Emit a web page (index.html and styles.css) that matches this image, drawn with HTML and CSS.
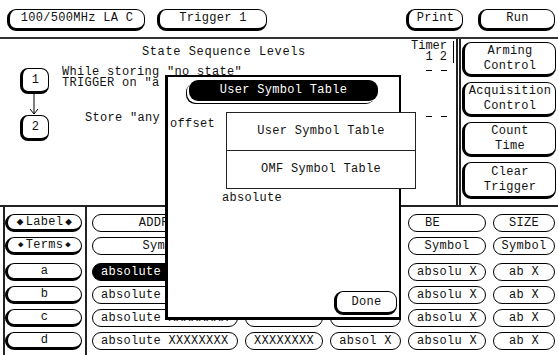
FILE: index.html
```html
<!doctype html>
<html lang="en">
<head>
<meta charset="UTF-8">
<title>State Sequence Levels</title>
<link rel="stylesheet" href="styles.css">
</head>
<body>
  <header class="topbar">
    <div class="btn raised w-la">100/500MHz LA C</div>
    <div class="btn raised w-trig">Trigger 1</div>
    <div class="btn raised w-print">Print</div>
    <div class="btn raised w-run">Run</div>
  </header>

  <section class="main">
    <div class="seq">
      <div class="seq-body">
        <div class="seq-title">State Sequence Levels</div>
        <div class="level level-1">
          <div class="lvl-box">1</div>
          <div class="lvl-text">
            <div>While storing ″no state″</div>
            <div>TRIGGER on ″a</div>
          </div>
        </div>
        <div class="arrow">
          <svg width="10" height="21" viewBox="0 0 10 21"><path d="M5 0V20M1 15L5 20L9 15" fill="none" stroke="#000" stroke-width="1"/></svg>
        </div>
        <div class="level level-2">
          <div class="lvl-box">2</div>
          <div class="lvl-text">Store ″any</div>
        </div>
      </div>
      <div class="timer">
        <div class="timer-head">Timer<br>1 2</div>
        <div class="dash"><span></span><span></span></div>
        <div class="dash dash-2"><span></span><span></span></div>
      </div>
    </div>
    <div class="vsep"></div>
    <nav class="side">
      <div class="btn raised">Arming<br>Control</div>
      <div class="btn raised">Acquisition<br>Control</div>
      <div class="btn raised">Count<br>Time</div>
      <div class="btn raised tall">Clear<br>Trigger</div>
    </nav>
  </section>

  <section class="table">
    <div class="labels">
      <div class="btn raised"><i>◆</i>Label<i>◆</i></div>
      <div class="btn raised"><i class="sm">◆</i>Terms<i class="sm">◆</i></div>
      <div class="btn raised r3">a</div>
      <div class="btn raised">b</div>
      <div class="btn raised">c</div>
      <div class="btn raised">d</div>
    </div>
    <div class="cells">
      <div class="btn">ADDRESS</div>
      <div class="btn"></div>
      <div class="btn"></div>
      <div class="btn pad-l">BE</div>
      <div class="btn">SIZE</div>

      <div class="btn">Symbol</div>
      <div class="btn"></div>
      <div class="btn"></div>
      <div class="btn">Symbol</div>
      <div class="btn">Symbol</div>

      <div class="btn left on r3">absolute XXXXXXXX</div>
      <div class="btn r3"></div>
      <div class="btn r3"></div>
      <div class="btn r3">absolu X</div>
      <div class="btn r3">ab X</div>

      <div class="btn left">absolute XXXXXXXX</div>
      <div class="btn"></div>
      <div class="btn"></div>
      <div class="btn">absolu X</div>
      <div class="btn">ab X</div>

      <div class="btn left">absolute XXXXXXXX</div>
      <div class="btn"></div>
      <div class="btn"></div>
      <div class="btn">absolu X</div>
      <div class="btn">ab X</div>

      <div class="btn left">absolute XXXXXXXX</div>
      <div class="btn">XXXXXXXX</div>
      <div class="btn">absol X</div>
      <div class="btn">absolu X</div>
      <div class="btn">ab X</div>
    </div>
  </section>

  <!-- symbol dialog over the trigger screen -->
  <div class="dialog">
    <div class="dlg-title">User Symbol Table</div>
    <div class="dlg-offset">offset</div>
    <div class="dlg-base">absolute</div>
    <div class="btn raised done">Done</div>
  </div>
  <div class="menu">
    <div class="menu-item">User Symbol Table</div>
    <div class="menu-item">OMF Symbol Table</div>
  </div>
</body>
</html>
```

FILE: styles.css
```css
*{margin:0;
  padding:0;
  box-sizing:border-box;}
body{width:558px;
     height:355px;
     overflow:hidden;
     position:relative;
     background:#fff;
     color:#111;
     font:12px/11px "Liberation Mono", "DejaVu Sans Mono", monospace;
     letter-spacing:0.3px;}

.btn{display:flex;
     align-items:center;
     justify-content:center;
     text-align:center;
     white-space:nowrap;
     overflow:hidden;
     border:1px solid #000;
     border-radius:9px;
     background:#fff;}
.raised{border-left-width:3px;
        border-bottom-width:3px;}

/* top bar */
.topbar{display:flex;
        height:39px;
        padding:9px 3px 0 7px;
        border-bottom:2px solid #333;}
.topbar .btn{height:22px;
             padding-bottom:1px;}
.w-la{width:138px;}
.w-trig{width:110px; margin-left:12px;}
.w-print{width:57px; margin-left:auto;}
.w-run{width:77px; margin-left:15px;}

/* sequence area */
.main{display:flex;
      height:168px;
      border-bottom:2px solid #222;}
.seq{width:456px;
     display:flex;}
.seq-body{flex:1;
          padding-top:8px;
          white-space:nowrap;}
.seq-title{padding-left:142px;
           letter-spacing:0.6px;}
.level{display:flex;
       align-items:flex-start;}
.level-1{margin-top:9px;}
.lvl-box{width:29px;
         height:26px;
         margin-left:20px;
         border:1px solid #000;
         border-left-width:3px;
         border-bottom-width:3px;
         border-radius:8px;
         display:flex;
         align-items:center;
         justify-content:center;}
.level-1 .lvl-box{margin-top:1px;}
.level-1 .lvl-text{margin-left:13px;}
.level-2 .lvl-box{margin-top:2px;}
.level-2 .lvl-text{margin-left:36px;}
.arrow{height:19px;
       margin-left:29px;}
.arrow svg{display:block;}

.timer{width:46px;
       padding-top:2px;
       text-align:right;}
.timer-head{height:22px;
            margin-right:2px;
            padding-right:6px;
            letter-spacing:0;
            border-right:1px solid #000;}
.dash{display:flex;
      justify-content:flex-end;
      gap:9px;
      margin-top:7px;
      padding-right:9px;}
.dash span{width:6px;
           border-top:1px solid #000;}
.dash-2{margin-top:45px;}

.vsep{width:5px;
      border-left:2px solid #222;
      border-right:2px solid #222;}
.side{flex:1;
      display:flex;
      flex-direction:column;
      gap:5px;
      padding:3px 2px 0 1px;}
.side .btn{height:35px;
           line-height:15px;}
.side .tall{height:37px;}

/* label / term table */
.table{display:flex;
       height:148px;}
.labels{width:84px;
        margin-left:3px;
        border-left:2px solid #222;
        border-right:2px solid #222;
        padding:7px 3px 0 0;
        display:flex;
        flex-direction:column;
        gap:5px;}
.labels .btn{height:18px;}
.labels i{font-style:normal;
          font-size:11px;
          margin:0 2px;}
.labels i.sm{font-size:9px;}
.cells{display:grid;
       grid-template-columns:146px 78px 71px 78px 62px;
       grid-template-rows:18px 18px 21px 18px 18px 18px;
       column-gap:7px;
       row-gap:5px;
       padding:7px 0 0 5px;}
.cells .btn{height:18px;}
.r3{margin-top:3px;}
.cells .left{justify-content:flex-start;
             padding-left:8px;}
.cells .pad-l{justify-content:flex-start;
              padding-left:16px;}
.cells .on{background:#000;
           color:#fff;}

/* dialog */
.dialog{position:absolute;
        left:165px;
        top:75px;
        width:236px;
        height:245px;
        background:#fff;
        border:2px solid #000;
        border-left-width:3px;
        border-bottom-width:3px;
        display:flex;
        flex-direction:column;}
.dlg-title{margin:3px 0 0 21px;
           width:189px;
           height:21px;
           background:#000;
           color:#fff;
           border-radius:9px;
           box-shadow:-2px 2px 0 #fff, -3px 3px 0 #000;
           display:flex;
           align-items:center;
           justify-content:center;}
.dlg-offset{margin-top:18px;
            padding-left:2px;}
.dlg-base{margin-top:63px;
          padding-left:54px;}
.done{margin-top:auto;
      align-self:flex-end;
      margin-right:2px;
      margin-bottom:2px;
      width:63px;
      height:24px;}

.menu{position:absolute;
      left:226px;
      top:112px;
      width:190px;
      height:77px;
      background:#fff;
      border:1px solid #222;
      display:flex;
      flex-direction:column;}
.menu-item{flex:1;
           display:flex;
           align-items:center;
           justify-content:center;}
.menu-item + .menu-item{border-top:1px solid #222;}
```
